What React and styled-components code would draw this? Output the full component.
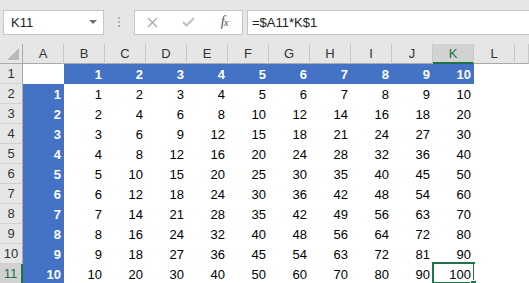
import React from 'react';
import styled, { createGlobalStyle } from 'styled-components';

const GlobalStyle = createGlobalStyle`
  html, body {
    margin: 0;
    padding: 0;
    background: #ffffff;
    overflow: hidden;
  }
  body {
    font-family: "Liberation Sans", Arial, sans-serif;
  }
`;

const Window = styled.div`
  width: 529px;
  height: 283px;
  overflow: hidden;
  background: #ffffff;
`;

const FormulaBar = styled.div`
  display: flex;
  align-items: center;
  height: 44px;
  padding-left: 3px;
  background: #e6e6e6;
  box-sizing: border-box;
`;

const NameBox = styled.div`
  width: 101px;
  height: 25px;
  box-sizing: border-box;
  background: #fff;
  border: 1px solid #c6c6c6;
  display: flex;
  align-items: center;
  justify-content: space-between;
  padding: 0 6px 0 7px;
  font-size: 13px;
  color: #222;
`;

const Caret = styled.span`
  width: 0;
  height: 0;
  border-left: 4px solid transparent;
  border-right: 4px solid transparent;
  border-top: 4px solid #707070;
`;

const Grip = styled.div`
  width: 30px;
  display: flex;
  flex-direction: column;
  align-items: center;
  gap: 2px;
`;

const Dot = styled.span`
  width: 2px;
  height: 2px;
  background: #b0b0b0;
`;

const ButtonGroup = styled.div`
  width: 109px;
  height: 25px;
  box-sizing: border-box;
  background: #fff;
  border: 1px solid #c6c6c6;
  display: flex;
  align-items: center;
`;

const IconButton = styled.span`
  flex: 1;
  display: flex;
  align-items: center;
  justify-content: center;
  color: ${p => p.$dim ? '#b4b4b4' : '#555'};
`;

const Fx = styled.span`
  font-family: "Liberation Serif", "Times New Roman", serif;
  font-style: italic;
  font-size: 14px;
  color: #555;
  letter-spacing: -1px;
  small {
    font-size: 11px;
  }
`;

const FormulaInput = styled.div`
  flex: 1;
  height: 25px;
  margin-left: 4px;
  box-sizing: border-box;
  background: #fff;
  border: 1px solid #c6c6c6;
  border-right: none;
  display: flex;
  align-items: center;
  padding-left: 4px;
  font-size: 13px;
  color: #222;
`;

const Sheet = styled.div`
  display: grid;
  grid-template-columns: 23px repeat(12, 41px) 1fr;
  grid-auto-rows: 20px;
  font-size: 13px;
`;

const Corner = styled.div`
  background: #e6e6e6;
  border-right: 1px solid #ababab;
  border-bottom: 1px solid #ababab;
  box-sizing: border-box;
  display: flex;
  align-items: flex-end;
  justify-content: flex-end;
  padding: 0 3px 3px 0;
`;

const CornerMark = styled.span`
  width: 0;
  height: 0;
  border-left: 12px solid transparent;
  border-bottom: 12px solid #b9b9b9;
`;

const ColHeader = styled.div`
  background: ${p => p.$active ? '#d2d2d2' : '#e6e6e6'};
  color: ${p => p.$active ? '#217346' : '#333'};
  border-right: 1px solid #c8c8c8;
  border-bottom: ${p => p.$active ? '2px solid #217346' : '1px solid #ababab'};
  box-sizing: border-box;
  display: flex;
  align-items: center;
  justify-content: center;
  padding-top: ${p => p.$active ? '1px' : '0'};
`;

const RowHeader = styled.div`
  background: ${p => p.$active ? '#d2d2d2' : '#e6e6e6'};
  color: ${p => p.$active ? '#217346' : '#333'};
  border-right: ${p => p.$active ? '2px solid #217346' : '1px solid #ababab'};
  border-bottom: 1px solid #d0d0d0;
  box-sizing: border-box;
  display: flex;
  align-items: center;
  justify-content: center;
`;

const Cell = styled.div`
  position: relative;
  background: ${p => p.$fill ? '#4472c4' : '#ffffff'};
  color: ${p => p.$fill ? '#ffffff' : '#000000'};
  font-weight: ${p => p.$fill ? 700 : 400};
  display: flex;
  align-items: center;
  justify-content: flex-end;
  padding-right: 3px;
  box-sizing: border-box;

  ${p => p.$selected && `
    &::after {
      content: '';
      position: absolute;
      inset: -2px -1px 0 -1px;
      border: 2px solid #217346;
    }
    &::before {
      content: '';
      position: absolute;
      right: -3px;
      bottom: -3px;
      width: 5px;
      height: 5px;
      background: #217346;
      border: 1px solid #fff;
      z-index: 1;
    }
  `}
`;

const letters = ['A', 'B', 'C', 'D', 'E', 'F', 'G', 'H', 'I', 'J', 'K', 'L', ''];

function CrossIcon() {
  return (
    <svg width="11" height="11" viewBox="0 0 11 11">
      <path d="M1 1 L10 10 M10 1 L1 10" stroke="#a8a8a8" strokeWidth="1.3" fill="none" />
    </svg>
  );
}

function CheckIcon() {
  return (
    <svg width="13" height="10" viewBox="0 0 13 10">
      <path d="M1 5 L4.5 8.5 L12 1" stroke="#c0c0c0" strokeWidth="2" fill="none" />
    </svg>
  );
}

function cellValue(row, col) {
  // row: 1..11, col: 0..10 (A..K)
  if (row === 1 && col === 0) return { text: '', fill: false };
  if (row === 1) return { text: String(col), fill: true };
  if (col === 0) return { text: String(row - 1), fill: true };
  return { text: String((row - 1) * col), fill: false };
}

export default function App() {
  const rows = Array.from({ length: 11 }, (_, i) => i + 1);

  return (
    <Window>
      <GlobalStyle />
      <FormulaBar>
        <NameBox>
          <span>K11</span>
          <Caret />
        </NameBox>
        <Grip>
          <Dot />
          <Dot />
          <Dot />
        </Grip>
        <ButtonGroup>
          <IconButton $dim><CrossIcon /></IconButton>
          <IconButton $dim><CheckIcon /></IconButton>
          <IconButton><Fx>f<small>x</small></Fx></IconButton>
        </ButtonGroup>
        <FormulaInput>=$A11*K$1</FormulaInput>
      </FormulaBar>

      <Sheet>
        <Corner><CornerMark /></Corner>
        {letters.map((l, i) => (
          <ColHeader key={'h' + i} $active={l === 'K'}>{l}</ColHeader>
        ))}
        {rows.map(r => (
          <React.Fragment key={r}>
            <RowHeader $active={r === 11}>{r}</RowHeader>
            {Array.from({ length: 11 }, (_, c) => {
              const v = cellValue(r, c);
              return (
                <Cell key={c} $fill={v.fill} $selected={r === 11 && c === 10}>
                  {v.text}
                </Cell>
              );
            })}
            <Cell />
            <Cell />
          </React.Fragment>
        ))}
      </Sheet>
    </Window>
  );
}
